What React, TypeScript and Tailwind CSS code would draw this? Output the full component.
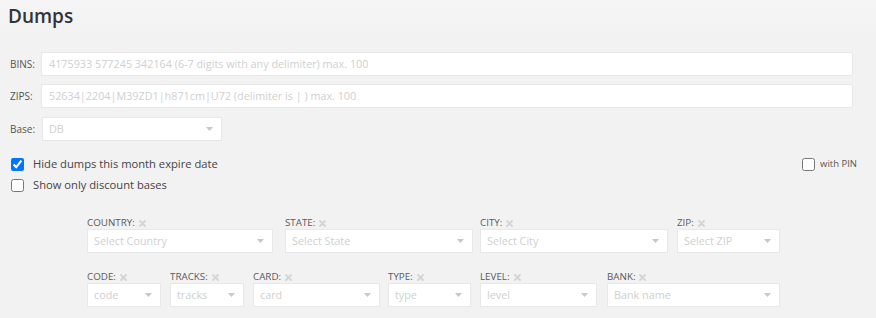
import React from 'react'

const font = { fontFamily: '"Open Sans", "Liberation Sans", sans-serif' }

function Caret() {
  return (
    <svg width="7" height="4" viewBox="0 0 7 4" className="shrink-0">
      <path d="M0 0h7L3.5 4z" fill="#c8c8c8" />
    </svg>
  )
}

function Cross() {
  return (
    <svg width="7" height="7" viewBox="0 0 7 7" className="ml-[4px]">
      <path d="M1 1l5 5M6 1L1 6" stroke="#d4d4d4" strokeWidth="1.8" strokeLinecap="round" />
    </svg>
  )
}

function FakeSelect({ placeholder, className }: { placeholder: string; className: string }) {
  return (
    <div
      className={`flex items-center justify-between bg-white border border-[#e8e8e8] pl-[6px] pr-[8px] text-[10.8px] text-[#d0d0d0] ${className}`}
    >
      <span>{placeholder}</span>
      <Caret />
    </div>
  )
}

function Filter({ label, placeholder, w, ml }: { label: string; placeholder: string; w: string; ml: string }) {
  return (
    <div className={`flex flex-col ${w} ${ml}`}>
      <div className="flex items-center h-[12px] text-[9.8px] text-[#5a5a5a]">
        {label}:
        <Cross />
      </div>
      <FakeSelect placeholder={placeholder} className="h-[24px]" />
    </div>
  )
}

export default function App() {
  return (
    <div className="w-full min-h-[318px] bg-[#f2f2f2]" style={font}>
      <div className="h-[38px] px-[8px] bg-gradient-to-b from-[#f5f5f5] to-[#f2f2f2]">
        <h1 className="pt-[2px] text-[19px] font-semibold leading-[28px] text-[#333]">Dumps</h1>
      </div>

      <div className="pt-[14px] pl-[10px] pr-[23px]">
        <div className="flex items-center h-[24px]">
          <span className="w-[31px] text-[10px] text-[#555]">BINS:</span>
          <div className="flex-1 h-[24px] flex items-center bg-white border border-[#e8e8e8] pl-[7px] text-[10.8px] text-[#d0d0d0]">
            4175933 577245 342164 (6-7 digits with any delimiter) max. 100
          </div>
        </div>
        <div className="flex items-center h-[24px] mt-[8px]">
          <span className="w-[31px] text-[10px] text-[#555]">ZIPS:</span>
          <div className="flex-1 h-[24px] flex items-center bg-white border border-[#e8e8e8] pl-[7px] text-[10.8px] text-[#d0d0d0]">
            52634|2204|M39ZD1|h871cm|U72 (delimiter is | ) max. 100
          </div>
        </div>
        <div className="flex items-center h-[24px] mt-[9px]">
          <span className="w-[32px] text-[10px] text-[#555]">Base:</span>
          <FakeSelect placeholder="DB" className="w-[180px] h-[24px]" />
        </div>

        <div className="flex justify-between mt-[16px]">
          <div className="flex flex-col gap-[7px]">
            <label className="flex items-center gap-[9px] h-[14px] text-[11.2px] text-[#444]">
              <input type="checkbox" defaultChecked className="w-[13px] h-[13px] m-0 ml-[1px] accent-[#0075ff]" />
              Hide dumps this month expire date
            </label>
            <label className="flex items-center gap-[9px] h-[14px] text-[11.2px] text-[#444]">
              <input type="checkbox" className="w-[13px] h-[13px] m-0 ml-[1px]" />
              Show only discount bases
            </label>
          </div>
          <label className="flex items-start gap-[5px] h-[14px] text-[9.5px] text-[#555] mr-[-4px]">
            <input type="checkbox" className="w-[13px] h-[13px] m-0 mt-[1px]" />
            with PIN
          </label>
        </div>

        <div className="pl-[77px] mt-[25px]">
          <div className="flex">
            <Filter label="COUNTRY" placeholder="Select Country" w="w-[186px]" ml="ml-0" />
            <Filter label="STATE" placeholder="Select State" w="w-[188px]" ml="ml-[12px]" />
            <Filter label="CITY" placeholder="Select City" w="w-[188px]" ml="ml-[7px]" />
            <Filter label="ZIP" placeholder="Select ZIP" w="w-[103px]" ml="ml-[9px]" />
          </div>
          <div className="flex mt-[18px]">
            <Filter label="CODE" placeholder="code" w="w-[74px]" ml="ml-0" />
            <Filter label="TRACKS" placeholder="tracks" w="w-[74px]" ml="ml-[9px]" />
            <Filter label="CARD" placeholder="card" w="w-[127px]" ml="ml-[9px]" />
            <Filter label="TYPE" placeholder="type" w="w-[83px]" ml="ml-[8px]" />
            <Filter label="LEVEL" placeholder="level" w="w-[117px]" ml="ml-[9px]" />
            <Filter label="BANK" placeholder="Bank name" w="w-[173px]" ml="ml-[10px]" />
          </div>
        </div>
      </div>
    </div>
  )
}
